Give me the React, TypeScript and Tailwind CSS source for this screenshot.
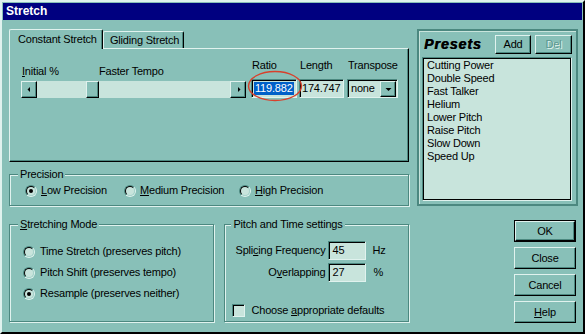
import type { ReactNode } from "react";

// Win95-style "Stretch" dialog in a teal colour scheme.

const raised =
  "border border-t-[#e0f2ee] border-l-[#e0f2ee] border-r-black border-b-black shadow-[inset_-1px_-1px_0_#4c8880]";
const sunken =
  "border border-t-[#4c8880] border-l-[#4c8880] border-r-[#e0f2ee] border-b-[#e0f2ee] shadow-[inset_1px_1px_0_#000]";
const etched =
  "border border-[#4c8880] shadow-[1px_1px_0_#e0f2ee,inset_1px_1px_0_#e0f2ee]";

function U({ children }: { children: ReactNode }) {
  return <span className="underline underline-offset-[1px]">{children}</span>;
}

function Radio({ checked }: { checked?: boolean }) {
  return (
    <span className="flex h-[12px] w-[12px] shrink-0 items-center justify-center rounded-full border border-t-[#4c8880] border-l-[#4c8880] border-r-[#e0f2ee] border-b-[#e0f2ee]">
      <span className="flex h-[10px] w-[10px] items-center justify-center rounded-full border border-t-black border-l-black border-r-[#a8d4cc] border-b-[#a8d4cc] bg-[#c8e4dc]">
        {checked && <span className="h-[4px] w-[4px] rounded-full bg-black" />}
      </span>
    </span>
  );
}

function ArrowBtn({ dir }: { dir: "left" | "right" | "down" }) {
  return (
    <span className={`flex h-full w-[16px] shrink-0 items-center justify-center bg-[#88c0b8] ${raised}`}>
      <svg width="7" height="7" viewBox="0 0 7 7">
        {dir === "left" && <path d="M4 1 L4 6 L1.5 3.5 Z" fill="#000" />}
        {dir === "right" && <path d="M3 1 L3 6 L5.5 3.5 Z" fill="#000" />}
        {dir === "down" && <path d="M0.5 2 L6.5 2 L3.5 5 Z" fill="#000" />}
      </svg>
    </span>
  );
}

function Button({ children, isDefault, disabled }: { children: ReactNode; isDefault?: boolean; disabled?: boolean }) {
  return (
    <div className={isDefault ? "h-full w-full border border-black" : "h-full w-full"}>
      <div
        className={`flex h-full w-full items-center justify-center bg-[#88c0b8] ${raised} ${
          disabled ? "text-[#5c9890] [text-shadow:1px_1px_0_#e0f2ee]" : "text-black"
        }`}
      >
        {children}
      </div>
    </div>
  );
}

const PRESETS = [
  "Cutting Power",
  "Double Speed",
  "Fast Talker",
  "Helium",
  "Lower Pitch",
  "Raise Pitch",
  "Slow Down",
  "Speed Up",
];

export default function App() {
  return (
    <div className="h-[334px] w-[585px] overflow-hidden bg-[#88c0b8] font-['Liberation_Sans',Arial,sans-serif] text-[11px] leading-[13px] tracking-[-0.2px] text-black">
      <div className="h-full w-full border-2 border-t-[#e0f2ee] border-l-[#e0f2ee] border-r-black border-b-black p-[1px]">
        {/* Title bar */}
        <div className="flex h-[17px] items-center bg-[#000080] pl-[3px] text-[12px] font-bold tracking-normal text-white">
          Stretch
        </div>

        <div className="flex">
          {/* Left column */}
          <div className="ml-[6px] mt-[9px] w-[400px]">
            {/* Tabs */}
            <div className="flex h-[19px] items-end">
              <div className="relative z-10 mb-[-1px] flex h-[20px] w-[94px] items-start rounded-t-[2px] border border-b-0 border-t-[#e0f2ee] border-l-[#e0f2ee] border-r-black bg-[#88c0b8] pl-[8px] pt-[3px] shadow-[inset_-1px_0_0_#4c8880]">
                Constant Stretch
              </div>
              <div className="flex h-[17px] w-[81px] items-start rounded-t-[2px] border border-b-0 border-t-[#e0f2ee] border-l-[#e0f2ee] border-r-black pl-[6px] pt-[2px] shadow-[inset_-1px_0_0_#4c8880]">
                Gliding Stretch
              </div>
            </div>

            {/* Tab page */}
            <div className={`h-[114px] w-[400px] ${raised}`}>
              <div className="flex h-[49px] items-end pl-[11px] pt-[10px]">
                {/* Tempo slider */}
                <div className="w-[225px]">
                  <div className="flex">
                    <span className="w-[78px] pl-[1px]">
                      <U>I</U>nitial %
                    </span>
                    <span>Faster Tempo</span>
                  </div>
                  <div className="mt-[3px] flex h-[17px] bg-[#c8e4dc]">
                    <ArrowBtn dir="left" />
                    <span className="w-[49px]" />
                    <span className={`h-full w-[13px] bg-[#88c0b8] ${raised}`} />
                    <span className="flex-1" />
                    <ArrowBtn dir="right" />
                  </div>
                </div>

                {/* Ratio */}
                <div className="relative ml-[5px] w-[46px]">
                  <div className="pl-[1px]">Ratio</div>
                  <div className={`mt-[7px] flex h-[19px] items-center bg-[#c8e4dc] pl-[2px] ${sunken}`}>
                    <span className="bg-[#0060c8] px-[1px] text-white">119.882</span>
                  </div>
                  <svg className="absolute left-[-4px] top-[11px]" width="56" height="32" viewBox="0 0 56 32">
                    <ellipse cx="28" cy="16" rx="26.5" ry="14.5" fill="none" stroke="#d8402c" strokeWidth="1.4" />
                  </svg>
                </div>

                {/* Length */}
                <div className="ml-[2px] w-[45px]">
                  <div className="pl-[1px]">Length</div>
                  <div className={`mt-[7px] flex h-[19px] items-center bg-[#c8e4dc] pl-[2px] ${sunken}`}>174.747</div>
                </div>

                {/* Transpose */}
                <div className="ml-[3px] w-[51px]">
                  <div className="pl-[1px]">Transpose</div>
                  <div className={`mt-[7px] flex h-[19px] items-center bg-[#c8e4dc] pl-[3px] ${sunken}`}>
                    <span className="flex-1">none</span>
                    <span className="h-full">
                      <span className="flex h-[17px] pr-[1px] pt-[1px]">
                        <ArrowBtn dir="down" />
                      </span>
                    </span>
                  </div>
                </div>
              </div>
            </div>

            {/* Precision */}
            <fieldset className={`mt-[6px] h-[38px] w-[400px] ${etched}`}>
              <legend className="ml-[8px] bg-[#88c0b8] px-[2px]">Precision</legend>
              <div className="mt-[3px] flex items-center pl-[15px]">
                <span className="flex w-[99px] items-center gap-[4px]">
                  <Radio checked />
                  <span>
                    <U>L</U>ow Precision
                  </span>
                </span>
                <span className="flex w-[115px] items-center gap-[4px]">
                  <Radio />
                  <span>
                    <U>M</U>edium Precision
                  </span>
                </span>
                <span className="flex items-center gap-[4px]">
                  <Radio />
                  <span>
                    <U>H</U>igh Precision
                  </span>
                </span>
              </div>
            </fieldset>

            {/* Bottom groups */}
            <div className="mt-[12px] flex">
              <fieldset className={`h-[104px] w-[206px] ${etched}`}>
                <legend className="ml-[8px] bg-[#88c0b8] px-[2px]">
                  <U>S</U>tretching Mode
                </legend>
                <div className="mt-[10px] pl-[13px]">
                  {[
                    ["Time Stretch (preserves pitch)", false],
                    ["Pitch Shift (preserves tempo)", false],
                    ["Resample (preserves neither)", true],
                  ].map(([label, on]) => (
                    <div key={label as string} className="flex h-[21px] items-center gap-[5px]">
                      <Radio checked={on as boolean} />
                      <span>{label}</span>
                    </div>
                  ))}
                </div>
              </fieldset>

              <fieldset className={`ml-[10px] h-[104px] w-[185px] ${etched}`}>
                <legend className="ml-[6px] bg-[#88c0b8] px-[2px]">Pitch and Time settings</legend>
                <div className="mt-[10px] flex items-center">
                  <span className="w-[100px] text-right">
                    Spli<U>c</U>ing Frequency
                  </span>
                  <span className={`ml-[3px] flex h-[19px] w-[38px] items-center bg-[#c8e4dc] pl-[3px] ${sunken}`}>45</span>
                  <span className="ml-[6px]">Hz</span>
                </div>
                <div className="mt-[3px] flex items-center">
                  <span className="w-[100px] text-right">
                    O<U>v</U>erlapping
                  </span>
                  <span className={`ml-[3px] flex h-[19px] w-[38px] items-center bg-[#c8e4dc] pl-[3px] ${sunken}`}>27</span>
                  <span className="ml-[7px]">%</span>
                </div>
                <div className="mt-[22px] flex items-center gap-[6px] pl-[7px]">
                  <span className={`h-[13px] w-[13px] bg-[#c8e4dc] ${sunken}`} />
                  <span>
                    Choose <U>a</U>ppropriate defaults
                  </span>
                </div>
              </fieldset>
            </div>
          </div>

          {/* Right column */}
          <div className="ml-[8px] mt-[9px] flex w-[161px] flex-col">
            <div className="h-[177px] w-[161px] border-2 border-[#4c8880] pl-[3px] pr-[4px] shadow-[inset_1px_1px_0_#c8e4dc]">
              <div className="mt-[4px] flex h-[19px] items-center">
                <span className="ml-[2px] text-[14px] font-bold italic tracking-[1px] [text-shadow:0.6px_0_0_#000]">
                  Presets
                </span>
                <span className="ml-auto h-[19px] w-[36px]">
                  <Button>Add</Button>
                </span>
                <span className="ml-[4px] h-[19px] w-[37px]">
                  <Button disabled>Del</Button>
                </span>
              </div>
              <div className="mt-[3px] h-[144px] border border-[#4c8880] border-r-[#e0f2ee] border-b-[#e0f2ee]">
                <div className="h-full border border-black bg-[#c8e4dc] pl-[3px]">
                  {PRESETS.map((p) => (
                    <div key={p} className="h-[13px]">
                      {p}
                    </div>
                  ))}
                </div>
              </div>
            </div>

            <div className="ml-[97px] mt-[14px] flex w-[62px] flex-col gap-[5px]">
              <div className="h-[22px]">
                <Button isDefault>OK</Button>
              </div>
              <div className="h-[22px]">
                <Button>Close</Button>
              </div>
              <div className="h-[22px]">
                <Button>Cancel</Button>
              </div>
              <div className="h-[22px]">
                <Button>
                  <span>
                    <U>H</U>elp
                  </span>
                </Button>
              </div>
            </div>
          </div>
        </div>
      </div>
    </div>
  );
}
